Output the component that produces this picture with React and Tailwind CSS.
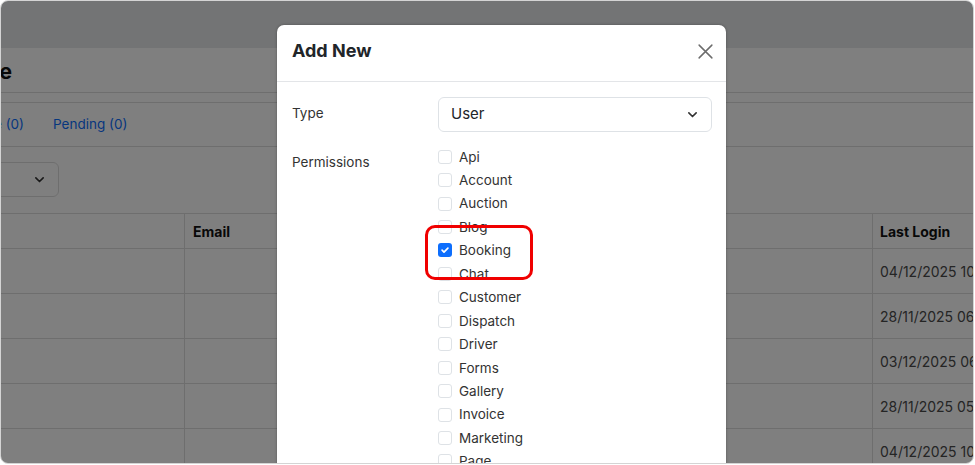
import React from "react";

const perms = [
  "Api","Account","Auction","Blog","Booking","Chat","Customer","Dispatch","Driver","Forms","Gallery","Invoice","Marketing","Page",
];

const dates = ["04/12/2025 10:21","28/11/2025 06:14","03/12/2025 06:40","28/11/2025 05:32","04/12/2025 10:05"];

function Chevron({ className }) {
  return (
    <svg className={className} viewBox="0 0 16 16" fill="none" stroke="currentColor" strokeWidth="2" strokeLinecap="round" strokeLinejoin="round">
      <path d="M3.5 6l4.5 4.5L12.5 6" />
    </svg>
  );
}

export default function App() {
  return (
    <div className="relative w-[975px] h-[465px] overflow-hidden bg-white" style={{ fontFamily: "Inter, 'Noto Sans', sans-serif" }}>
      <div className="relative w-[974px] h-[464px] overflow-hidden rounded-[8px] border border-[#d4d4d4] bg-white">
        {/* Page */}
        <div className="h-[47px] bg-[#e7e8eb]" />
        <div className="h-[45px] border-b border-[#dcdcdc] flex items-center">
          <div className="flex justify-end w-[11px] overflow-hidden whitespace-nowrap text-[21px] font-bold text-[#111] mt-[3px]">Role</div>
        </div>
        <div className="mt-[9px] h-[45px] border-y border-[#dcdcdc] flex items-center text-[13.5px] text-[#0d6efd]">
          <div className="flex justify-end w-[23px] overflow-hidden whitespace-nowrap">Inactive (0)</div>
          <div className="ml-[29px]">Pending (0)</div>
        </div>
        <div className="mt-[15px] ml-[-40px] w-[98px] h-[35px] rounded-[6px] border border-[#dcdcdc] bg-white flex items-center justify-end pr-[12px] text-[#333]">
          <Chevron className="w-[13px] h-[13px]" />
        </div>
        <div className="mt-[16px] border-t border-[#dcdcdc]">
          <div className="grid grid-cols-[184px_688px_1fr] h-[35px] border-b border-[#dcdcdc] text-[14px] font-bold text-[#111]">
            <div className="border-r border-[#dcdcdc]" />
            <div className="border-r border-[#dcdcdc] flex items-center pl-[8px]">Email</div>
            <div className="flex items-center pl-[7px]">Last Login</div>
          </div>
          {dates.map((d) => (
            <div key={d} className="grid grid-cols-[184px_688px_1fr] h-[45px] border-b border-[#dcdcdc] text-[14px] text-[#4a4a4a]">
              <div className="border-r border-[#dcdcdc]" />
              <div className="border-r border-[#dcdcdc]" />
              <div className="flex items-center pl-[7px] whitespace-nowrap">{d}</div>
            </div>
          ))}
        </div>

        {/* Backdrop */}
        <div className="absolute inset-0 bg-black/50" />

        {/* Modal */}
        <div className="absolute left-[276px] top-[24px] w-[449px] h-[460px] rounded-[7px] bg-white shadow-[0_0_3px_rgba(0,0,0,0.3)]">
          <div className="h-[57px] border-b border-[#e3e5e8] flex items-center justify-between pl-[15px] pr-[12px]">
            <div className="text-[18px] font-bold text-[#212529] mt-[-5px]">Add New</div>
            <svg className="w-[17px] h-[17px] text-[#6c6c6c] mt-[-3px]" viewBox="0 0 16 16" fill="none" stroke="currentColor" strokeWidth="1.4" strokeLinecap="round">
              <path d="M2 2l12 12M14 2L2 14" />
            </svg>
          </div>
          <div className="pl-[15px] pr-[14px] pt-[15px]">
            <div className="flex items-center">
              <div className="w-[146px] text-[13.5px] text-[#333] mt-[-3px]">Type</div>
              <div className="flex-1 h-[35px] rounded-[6px] border border-[#dee2e6] flex items-center justify-between pl-[12px] pr-[12px] text-[15px] text-[#212529]">
                <span className="mt-[-1px]">User</span>
                <Chevron className="w-[13px] h-[13px] text-[#333]" />
              </div>
            </div>
            <div className="flex mt-[13px]">
              <div className="w-[146px] text-[13.5px] text-[#333] pt-[7px]">Permissions</div>
              <div className="flex flex-col">
                {perms.map((p) => (
                  <div key={p} className="h-[23.45px] flex items-center gap-[7px] text-[13.5px] text-[#333]">
                    {p === "Booking" ? (
                      <span className="w-[14px] h-[14px] rounded-[3px] bg-[#0d6efd] flex items-center justify-center">
                        <svg className="w-[10px] h-[10px]" viewBox="0 0 12 12" fill="none" stroke="white" strokeWidth="2" strokeLinecap="round" strokeLinejoin="round">
                          <path d="M2.5 6.2l2.3 2.3L9.5 3.8" />
                        </svg>
                      </span>
                    ) : (
                      <span className="w-[14px] h-[14px] rounded-[3px] border border-[#dee2e6] bg-white" />
                    )}
                    <span>{p}</span>
                  </div>
                ))}
              </div>
            </div>
          </div>
        </div>

        {/* Annotation */}
        <div className="absolute left-[424px] top-[224px] w-[108px] h-[55px] rounded-[10px] border-[3px] border-[#f00000]" />
      </div>
    </div>
  );
}
